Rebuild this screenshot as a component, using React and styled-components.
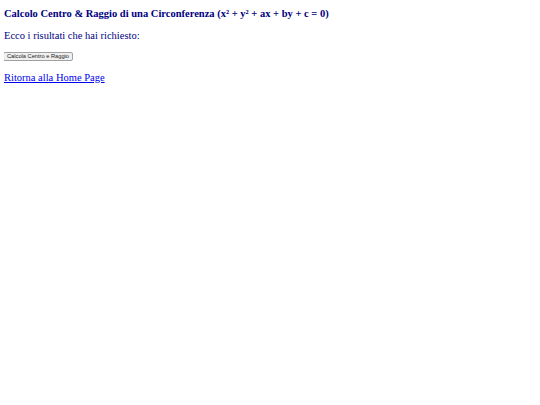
import styled, { createGlobalStyle } from "styled-components";

const GlobalStyle = createGlobalStyle`
  body {
    margin: 4px 4px;
    background: #ffffff;
    font-family: "Liberation Serif", "Times New Roman", serif;
    color: #000080;
  }
`;

export default function App() {
  return (
    <>
      <GlobalStyle />
      <Page>
        <Title>Calcolo Centro &amp; Raggio di una Circonferenza (x² + y² + ax + by + c = 0)</Title>
        <Text>Ecco i risultati che hai richiesto:</Text>
        <form onSubmit={(e) => e.preventDefault()}>
          <CalcButton type="submit">Calcola Centro e Raggio</CalcButton>
        </form>
        <HomeLink href="#">Ritorna alla Home Page</HomeLink>
      </Page>
    </>
  );
}

const Page = styled.div`
  display: flex;
  flex-direction: column;
  align-items: flex-start;
`;

const Title = styled.h3`
  margin: 3.5px 0 0;
  font-size: 10.5px;
  line-height: 12px;
  font-weight: bold;
  color: #000080;
`;

const Text = styled.p`
  margin: 10px 0 0;
  font-size: 10.5px;
  line-height: 12px;
`;

const CalcButton = styled.button`
  display: block;
  box-sizing: border-box;
  margin: 10.5px 0 0 -1px;
  height: 8.5px;
  padding: 0 3px;
  font-family: "Liberation Sans", Arial, sans-serif;
  font-size: 5.7px;
  line-height: 6px;
  color: #222;
  background: #efefef;
  border: 1px solid #a0a0a0;
  border-radius: 2px;
`;

const HomeLink = styled.a`
  margin-top: 11px;
  font-size: 10.5px;
  line-height: 12px;
  color: #0000ee;
`;
